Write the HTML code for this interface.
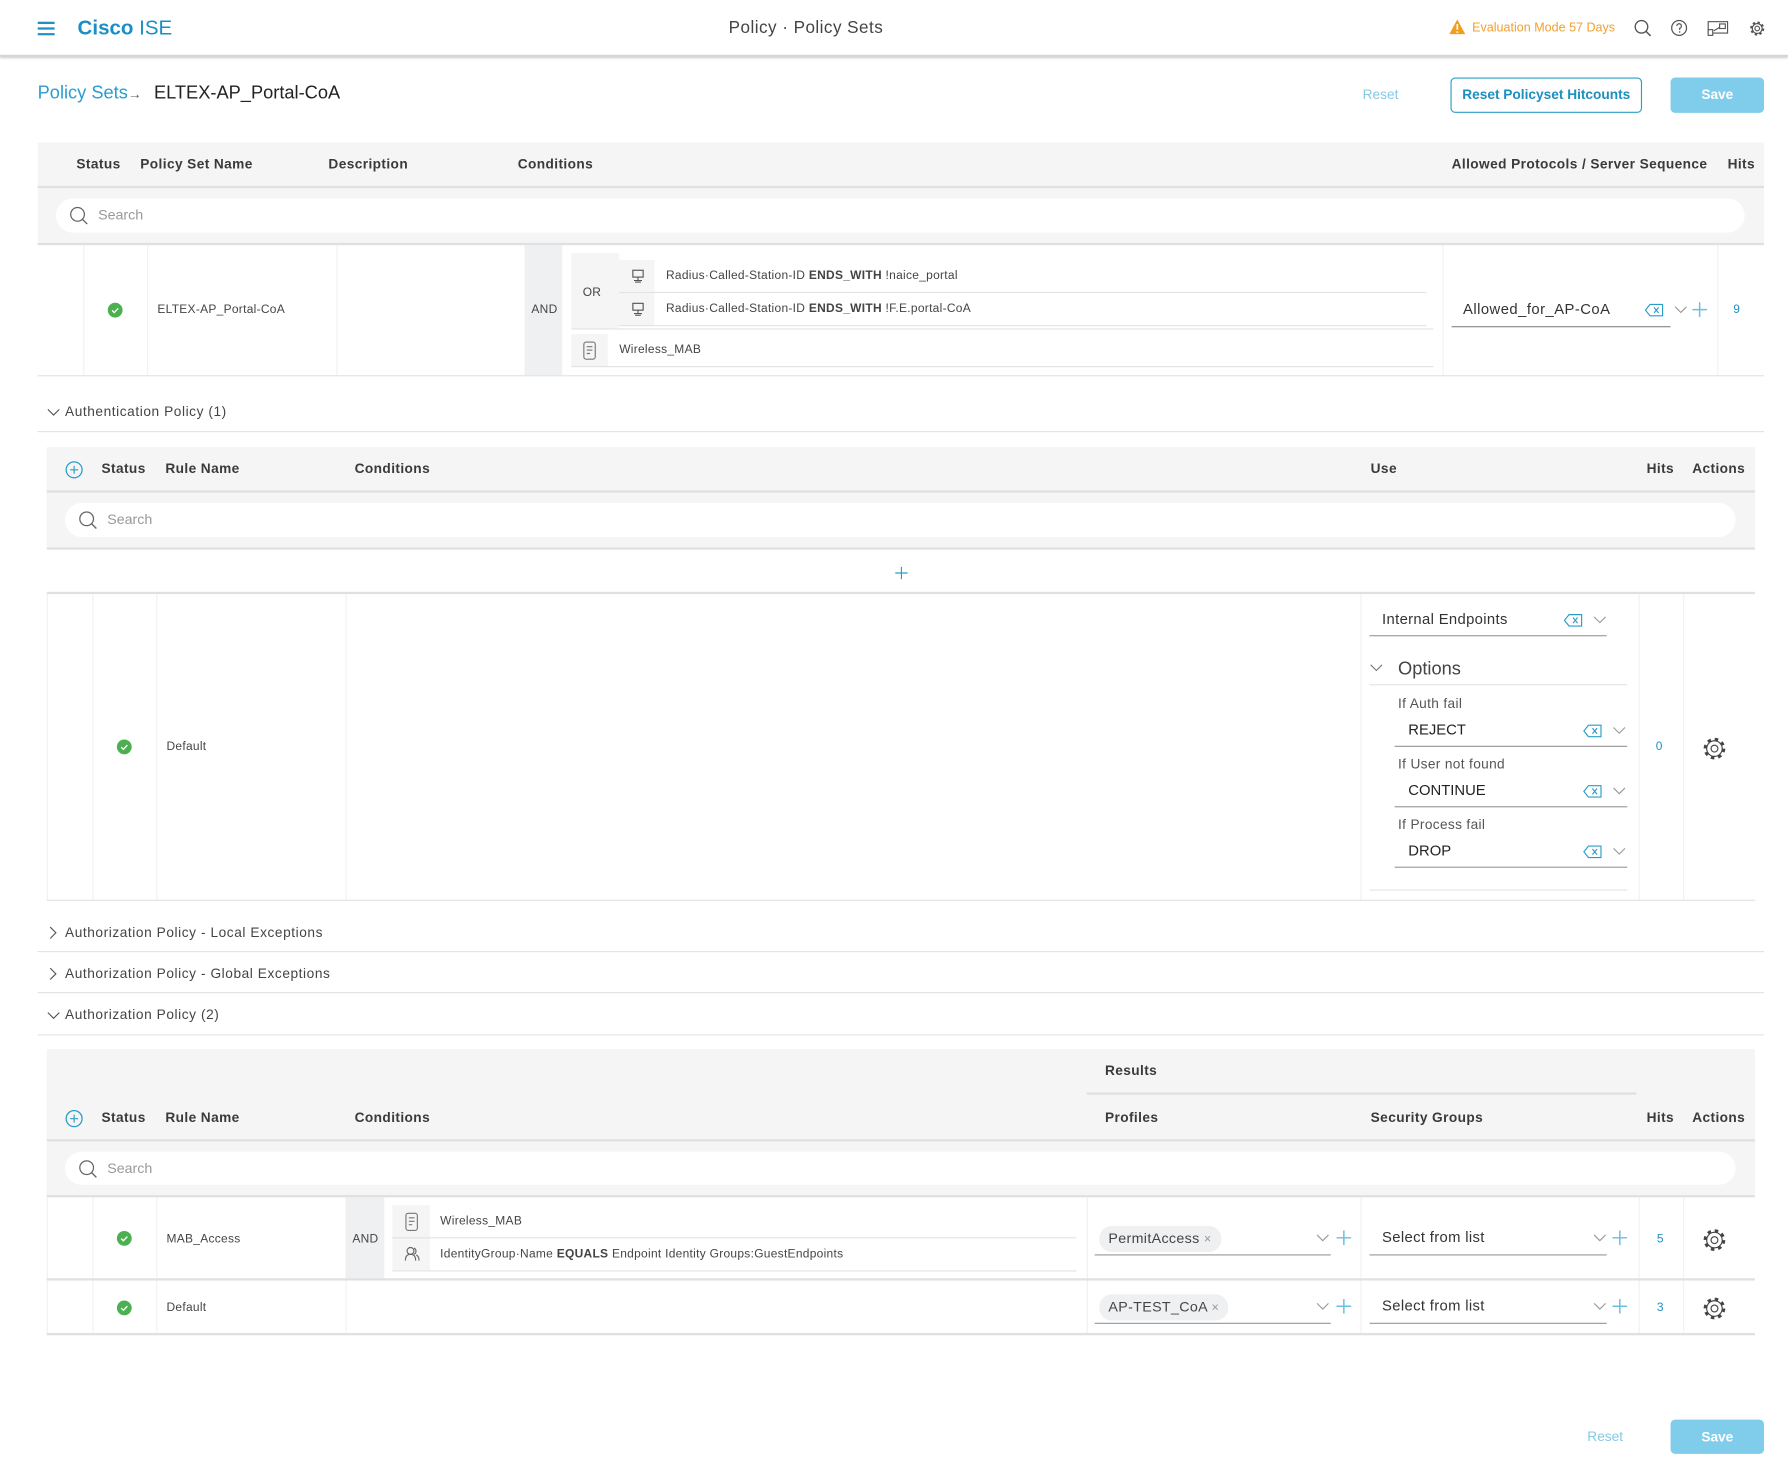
<!DOCTYPE html>
<html><head><meta charset="utf-8">
<style>
*{box-sizing:border-box;margin:0;padding:0}
html,body{width:1788px;height:1472px;overflow:hidden;background:#fff}
#w{position:absolute;left:0;top:0;width:1568px;height:1291px;transform:scale(1.14031);transform-origin:0 0;font-family:"Liberation Sans",Arial,sans-serif;color:#333}
.a{position:absolute}
.t{position:absolute;transform:translateY(-50%);white-space:nowrap;line-height:1.2}
.h{font-size:12px;font-weight:bold;color:#3a3a3a;letter-spacing:0.35px}
.c{font-size:10.5px;color:#444;letter-spacing:0.25px}
.s{font-size:12px;color:#444;letter-spacing:0.5px}
.bg{background:#f5f5f5}
.hl{position:absolute;height:1px;background:#e3e3e3}
.hl2{position:absolute;height:2px;background:#e0e0e0}
.vl{position:absolute;width:1px;background:#f0f0f0}
.pill{position:absolute;background:#fff;border-radius:15px}
.blue{color:#1f8fc4}
.chip{position:absolute;background:#eef0f2;border-radius:11px;font-size:12.5px;color:#444;line-height:22px;padding:0 8px;letter-spacing:0.3px}
</style></head><body><div id="w">

<div class="a" style="left:0;top:0;width:1568px;height:50px;border-bottom:2px solid #d6d6d6;box-shadow:0 1px 2px #ccc"></div>
<svg class="a" style="left:33px;top:19px" width="15" height="12"><path d="M0 1h15M0 6h15M0 11h15" stroke="#1f8fc4" stroke-width="2"/></svg>
<div class="t" style="left:68px;top:25px;font-size:18px;color:#1a8fc6"><b>Cisco</b> ISE</div>
<div class="t" style="left:639px;top:25px;font-size:15px;color:#444;letter-spacing:0.4px">Policy · Policy Sets</div>
<svg class="a" style="left:1271px;top:17px" width="14" height="13"><path d="M7 0L14 13H0z" fill="#f29d1e"/><path d="M7 4v5M7 10.5v1.3" stroke="#fff" stroke-width="1.5"/></svg>
<div class="t" style="left:1291px;top:25px;font-size:11px;color:#f0a030">Evaluation Mode 57 Days</div>
<svg class="a" style="left:1433px;top:17px" width="16" height="16"><circle cx="6.5" cy="6.5" r="5.5" stroke="#555" fill="none" stroke-width="1.2"/><path d="M10.5 10.5l4 4" stroke="#555" stroke-width="1.3"/></svg>
<svg class="a" style="left:1465px;top:17px" width="15" height="15"><circle cx="7.5" cy="7.5" r="6.5" stroke="#555" fill="none" stroke-width="1.1"/><path d="M5.5 5.8a2 2 0 1 1 2.5 2v1.4" stroke="#555" fill="none" stroke-width="1.1"/><circle cx="8" cy="11" r=".7" fill="#555"/></svg>
<svg class="a" style="left:1497px;top:18px" width="19" height="14"><rect x="1" y="1" width="17" height="10" fill="none" stroke="#555"/><rect x="1" y="8" width="4" height="5" fill="#fff" stroke="#555"/><rect x="11" y="3" width="5" height="4" fill="none" stroke="#555"/><path d="M6 9l5-3" stroke="#555"/></svg>
<svg class="a" style="left:1534px;top:18px" width="14" height="14"><circle cx="7" cy="7" r="5" fill="none" stroke="#555" stroke-width="2.4" stroke-dasharray="2 1.93"/><circle cx="7" cy="7" r="4.3" fill="#fff" stroke="#555"/><circle cx="7" cy="7" r="2" fill="none" stroke="#555"/></svg>

<div class="t" style="left:33px;top:82px;font-size:16px;color:#2a9dd0">Policy Sets<span style="font-size:12px;color:#555">→</span></div>
<div class="t" style="left:135px;top:82px;font-size:16px;color:#222">ELTEX-AP_Portal-CoA</div>
<div class="t" style="left:1195px;top:83px;font-size:12px;color:#86c9e6">Reset</div>
<div class="a" style="left:1272px;top:68px;width:168px;height:31px;border:1px solid #2a9dc6;border-radius:4px;text-align:center;line-height:29px;font-size:12px;font-weight:bold;color:#1c8fbf">Reset Policyset Hitcounts</div>
<div class="a" style="left:1465px;top:68px;width:82px;height:31px;background:#7fcdea;border-radius:4px;text-align:center;line-height:31px;font-size:12px;font-weight:bold;color:#fff">Save</div>

<div class="a bg" style="left:33px;top:125px;width:1514px;height:89px"></div>
<div class="hl2" style="left:33px;top:163px;width:1514px"></div>
<div class="hl2" style="left:33px;top:213px;width:1514px"></div>
<div class="t h" style="left:67px;top:144px">Status</div>
<div class="t h" style="left:123px;top:144px">Policy Set Name</div>
<div class="t h" style="left:288px;top:144px">Description</div>
<div class="t h" style="left:454px;top:144px">Conditions</div>
<div class="t h" style="left:1273px;top:144px">Allowed Protocols / Server Sequence</div>
<div class="t h" style="left:1515px;top:144px">Hits</div>
<div class="pill" style="left:49px;top:174px;width:1481px;height:30px"></div>
<svg class="a" style="left:61px;top:181px" width="17" height="17"><circle cx="7" cy="7" r="6" stroke="#666" fill="none" stroke-width="1.1"/><path d="M11 11l4.5 4.5" stroke="#666" stroke-width="1.2"/></svg>
<div class="t" style="left:86px;top:189px;font-size:12.5px;color:#999">Search</div>

<div class="vl" style="left:73px;top:215px;height:114px"></div>
<div class="vl" style="left:129px;top:215px;height:114px"></div>
<div class="vl" style="left:295px;top:215px;height:114px"></div>
<div class="vl" style="left:1265px;top:215px;height:114px"></div>
<div class="vl" style="left:1506px;top:215px;height:114px"></div>
<div class="a" style="left:460px;top:215px;width:33px;height:114px;background:#eef0f2"></div>
<svg class="a" style="left:94px;top:265px" width="14" height="14"><circle cx="7" cy="7" r="6.5" fill="#4caf50"/><path d="M4.3 7.2l1.9 1.9 3.5-3.7" stroke="#fff" fill="none" stroke-width="1.2"/></svg>
<div class="t c" style="left:138px;top:272px">ELTEX-AP_Portal-CoA</div>
<div class="t c" style="left:466px;top:272px">AND</div>
<div class="a bg" style="left:501px;top:222px;width:42px;height:66px"></div>
<div class="t c" style="left:511px;top:257px">OR</div>
<div class="a bg" style="left:543px;top:228px;width:31px;height:58px"></div>
<div class="hl" style="left:543px;top:256px;width:708px"></div>
<div class="hl" style="left:543px;top:285px;width:708px"></div>
<div class="hl" style="left:501px;top:288px;width:756px"></div>
<div class="a bg" style="left:501px;top:293px;width:32px;height:28px"></div>
<div class="hl" style="left:501px;top:321px;width:756px"></div>
<svg class="a" style="left:554px;top:236px" width="11" height="12"><rect x="1" y="1" width="9" height="6" fill="none" stroke="#555"/><path d="M5.5 7v3M2 10h7M3 11.5h5" stroke="#555"/></svg>
<svg class="a" style="left:554px;top:265px" width="11" height="12"><rect x="1" y="1" width="9" height="6" fill="none" stroke="#555"/><path d="M5.5 7v3M2 10h7M3 11.5h5" stroke="#555"/></svg>
<div class="t c" style="left:584px;top:242px">Radius·Called-Station-ID <b>ENDS_WITH</b> !naice_portal</div>
<div class="t c" style="left:584px;top:271px">Radius·Called-Station-ID <b>ENDS_WITH</b> !F.E.portal-CoA</div>
<svg class="a" style="left:511px;top:299px" width="13" height="17"><rect x="1" y="1" width="10" height="15" rx="2" fill="none" stroke="#777"/><path d="M3.5 5h5M3.5 8h5M3.5 11h3" stroke="#777"/></svg>
<div class="t c" style="left:543px;top:307px">Wireless_MAB</div>
<div class="t" style="left:1283px;top:271px;font-size:13px;color:#333;letter-spacing:0.4px">Allowed_for_AP-CoA</div>
<div class="a" style="left:1273px;top:286px;width:192px;height:1px;background:#888"></div>
<svg class="a" style="left:1442px;top:266px" width="17" height="12"><path d="M5 1h11v10H5L1 6z" stroke="#2a9dc6" fill="none"/><path d="M8.5 3.5l4 5M12.5 3.5l-4 5" stroke="#2a9dc6"/></svg>
<svg class="a" style="left:1468px;top:268px" width="12" height="7"><path d="M1 1l5 5 5-5" stroke="#999" fill="none"/></svg>
<svg class="a" style="left:1484px;top:265px" width="13" height="13"><path d="M6.5 0v13M0 6.5h13" stroke="#6bbfe0" stroke-width="1.3"/></svg>
<div class="t blue" style="left:1520px;top:272px;font-size:10.5px">9</div>
<div class="hl" style="left:33px;top:329px;width:1514px"></div>

<svg class="a" style="left:41px;top:358px" width="12" height="7"><path d="M1 1l5 5 5-5" stroke="#555" fill="none"/></svg>
<div class="t s" style="left:57px;top:361px">Authentication Policy (1)</div>
<div class="hl" style="left:33px;top:378px;width:1514px"></div>

<div class="a bg" style="left:41px;top:392px;width:1498px;height:89px"></div>
<div class="hl2" style="left:41px;top:430px;width:1498px"></div>
<div class="hl2" style="left:41px;top:480px;width:1498px"></div>
<svg class="a" style="left:57px;top:404px" width="16" height="16"><circle cx="8" cy="8" r="7" fill="none" stroke="#2a9dc6" stroke-width="1.1"/><path d="M8 4.5v7M4.5 8h7" stroke="#2a9dc6"/></svg>
<div class="t h" style="left:89px;top:411px">Status</div>
<div class="t h" style="left:145px;top:411px">Rule Name</div>
<div class="t h" style="left:311px;top:411px">Conditions</div>
<div class="t h" style="left:1202px;top:411px">Use</div>
<div class="t h" style="left:1444px;top:411px">Hits</div>
<div class="t h" style="left:1484px;top:411px">Actions</div>
<div class="pill" style="left:57px;top:441px;width:1465px;height:30px"></div>
<svg class="a" style="left:69px;top:448px" width="17" height="17"><circle cx="7" cy="7" r="6" stroke="#666" fill="none" stroke-width="1.1"/><path d="M11 11l4.5 4.5" stroke="#666" stroke-width="1.2"/></svg>
<div class="t" style="left:94px;top:456px;font-size:12.5px;color:#999">Search</div>
<svg class="a" style="left:785px;top:497px" width="11" height="11"><path d="M5.5 0v11M0 5.5h11" stroke="#2a9dc6"/></svg>
<div class="hl2" style="left:41px;top:519px;width:1498px"></div>

<div class="vl" style="left:41px;top:521px;height:268px"></div>
<div class="vl" style="left:81px;top:521px;height:268px"></div>
<div class="vl" style="left:137px;top:521px;height:268px"></div>
<div class="vl" style="left:303px;top:521px;height:268px"></div>
<div class="vl" style="left:1193px;top:521px;height:268px"></div>
<div class="vl" style="left:1437px;top:521px;height:268px"></div>
<div class="vl" style="left:1476px;top:521px;height:268px"></div>
<svg class="a" style="left:102px;top:648px" width="14" height="14"><circle cx="7" cy="7" r="6.5" fill="#4caf50"/><path d="M4.3 7.2l1.9 1.9 3.5-3.7" stroke="#fff" fill="none" stroke-width="1.2"/></svg>
<div class="t c" style="left:146px;top:655px">Default</div>
<div class="t" style="left:1212px;top:543px;font-size:13px;color:#333;letter-spacing:0.3px">Internal Endpoints</div>
<div class="a" style="left:1201px;top:557px;width:208px;height:1px;background:#999"></div>
<svg class="a" style="left:1371px;top:538px" width="17" height="12"><path d="M5 1h11v10H5L1 6z" stroke="#2a9dc6" fill="none"/><path d="M8.5 3.5l4 5M12.5 3.5l-4 5" stroke="#2a9dc6"/></svg>
<svg class="a" style="left:1397px;top:540px" width="12" height="7"><path d="M1 1l5 5 5-5" stroke="#999" fill="none"/></svg>
<svg class="a" style="left:1201px;top:582px" width="12" height="7"><path d="M1 1l5 5 5-5" stroke="#777" fill="none"/></svg>
<div class="t" style="left:1226px;top:587px;font-size:16px;color:#444">Options</div>
<div class="hl" style="left:1201px;top:600px;width:226px"></div>

<div class="t s" style="left:1226px;top:617px;color:#555;letter-spacing:0.3px">If Auth fail</div>
<div class="t" style="left:1235px;top:640px;font-size:13px;color:#222">REJECT</div>
<div class="a" style="left:1223px;top:654px;width:204px;height:1px;background:#999"></div>
<svg class="a" style="left:1388px;top:635px" width="17" height="12"><path d="M5 1h11v10H5L1 6z" stroke="#2a9dc6" fill="none"/><path d="M8.5 3.5l4 5M12.5 3.5l-4 5" stroke="#2a9dc6"/></svg>
<svg class="a" style="left:1414px;top:637px" width="12" height="7"><path d="M1 1l5 5 5-5" stroke="#999" fill="none"/></svg>

<div class="t s" style="left:1226px;top:670px;color:#555;letter-spacing:0.3px">If User not found</div>
<div class="t" style="left:1235px;top:693px;font-size:13px;color:#222">CONTINUE</div>
<div class="a" style="left:1223px;top:707px;width:204px;height:1px;background:#999"></div>
<svg class="a" style="left:1388px;top:688px" width="17" height="12"><path d="M5 1h11v10H5L1 6z" stroke="#2a9dc6" fill="none"/><path d="M8.5 3.5l4 5M12.5 3.5l-4 5" stroke="#2a9dc6"/></svg>
<svg class="a" style="left:1414px;top:690px" width="12" height="7"><path d="M1 1l5 5 5-5" stroke="#999" fill="none"/></svg>

<div class="t s" style="left:1226px;top:723px;color:#555;letter-spacing:0.3px">If Process fail</div>
<div class="t" style="left:1235px;top:746px;font-size:13px;color:#222">DROP</div>
<div class="a" style="left:1223px;top:760px;width:204px;height:1px;background:#999"></div>
<svg class="a" style="left:1388px;top:741px" width="17" height="12"><path d="M5 1h11v10H5L1 6z" stroke="#2a9dc6" fill="none"/><path d="M8.5 3.5l4 5M12.5 3.5l-4 5" stroke="#2a9dc6"/></svg>
<svg class="a" style="left:1414px;top:743px" width="12" height="7"><path d="M1 1l5 5 5-5" stroke="#999" fill="none"/></svg>
<div class="hl" style="left:1201px;top:780px;width:226px"></div>
<div class="t blue" style="left:1452px;top:655px;font-size:10.5px">0</div>
<svg class="a" style="left:1493px;top:646px" width="21" height="21"><circle cx="10.5" cy="10.5" r="8" fill="none" stroke="#444" stroke-width="3" stroke-dasharray="3 3.28"/><circle cx="10.5" cy="10.5" r="6.8" fill="#fff" stroke="#444" stroke-width="1"/><circle cx="10.5" cy="10.5" r="3" fill="none" stroke="#444"/></svg>
<div class="hl" style="left:41px;top:789px;width:1498px"></div>

<svg class="a" style="left:43px;top:812px" width="7" height="12"><path d="M1 1l5 5-5 5" stroke="#555" fill="none"/></svg>
<div class="t s" style="left:57px;top:818px">Authorization Policy - Local Exceptions</div>
<div class="hl" style="left:33px;top:834px;width:1514px"></div>
<svg class="a" style="left:43px;top:848px" width="7" height="12"><path d="M1 1l5 5-5 5" stroke="#555" fill="none"/></svg>
<div class="t s" style="left:57px;top:854px">Authorization Policy - Global Exceptions</div>
<div class="hl" style="left:33px;top:870px;width:1514px"></div>
<svg class="a" style="left:41px;top:887px" width="12" height="7"><path d="M1 1l5 5 5-5" stroke="#555" fill="none"/></svg>
<div class="t s" style="left:57px;top:890px">Authorization Policy (2)</div>
<div class="hl" style="left:33px;top:907px;width:1514px"></div>

<div class="a bg" style="left:41px;top:920px;width:1498px;height:129px"></div>
<div class="t h" style="left:969px;top:939px">Results</div>
<div class="hl2" style="left:953px;top:958px;width:482px"></div>
<div class="hl2" style="left:41px;top:999px;width:1498px"></div>
<div class="hl2" style="left:41px;top:1048px;width:1498px"></div>
<svg class="a" style="left:57px;top:973px" width="16" height="16"><circle cx="8" cy="8" r="7" fill="none" stroke="#2a9dc6" stroke-width="1.1"/><path d="M8 4.5v7M4.5 8h7" stroke="#2a9dc6"/></svg>
<div class="t h" style="left:89px;top:980px">Status</div>
<div class="t h" style="left:145px;top:980px">Rule Name</div>
<div class="t h" style="left:311px;top:980px">Conditions</div>
<div class="t h" style="left:969px;top:980px">Profiles</div>
<div class="t h" style="left:1202px;top:980px">Security Groups</div>
<div class="t h" style="left:1444px;top:980px">Hits</div>
<div class="t h" style="left:1484px;top:980px">Actions</div>
<div class="pill" style="left:57px;top:1010px;width:1465px;height:29px"></div>
<svg class="a" style="left:69px;top:1017px" width="17" height="17"><circle cx="7" cy="7" r="6" stroke="#666" fill="none" stroke-width="1.1"/><path d="M11 11l4.5 4.5" stroke="#666" stroke-width="1.2"/></svg>
<div class="t" style="left:94px;top:1025px;font-size:12.5px;color:#999">Search</div>

<div class="vl" style="left:41px;top:1050px;height:120px"></div>
<div class="vl" style="left:81px;top:1050px;height:120px"></div>
<div class="vl" style="left:137px;top:1050px;height:120px"></div>
<div class="vl" style="left:303px;top:1050px;height:120px"></div>
<div class="vl" style="left:953px;top:1050px;height:120px"></div>
<div class="vl" style="left:1193px;top:1050px;height:120px"></div>
<div class="vl" style="left:1437px;top:1050px;height:120px"></div>
<div class="vl" style="left:1476px;top:1050px;height:120px"></div>
<div class="a" style="left:303px;top:1050px;width:34px;height:72px;background:#eef0f2"></div>
<div class="t c" style="left:309px;top:1087px">AND</div>
<div class="a bg" style="left:344px;top:1057px;width:33px;height:57px"></div>
<div class="hl" style="left:344px;top:1085px;width:600px"></div>
<div class="hl" style="left:344px;top:1114px;width:600px"></div>
<svg class="a" style="left:355px;top:1063px" width="13" height="17"><rect x="1" y="1" width="10" height="15" rx="2" fill="none" stroke="#777"/><path d="M3.5 5h5M3.5 8h5M3.5 11h3" stroke="#777"/></svg>
<svg class="a" style="left:355px;top:1093px" width="13" height="13"><circle cx="5" cy="4" r="3" fill="none" stroke="#666"/><path d="M0.5 12.5c0-4 2-5.5 4.5-5.5s4.5 1.5 4.5 5.5M8 1.5a3 3 0 0 1 0 5.5M10 7.5c1.5.8 2.5 2.5 2.5 5" fill="none" stroke="#666"/></svg>
<div class="t c" style="left:386px;top:1071px">Wireless_MAB</div>
<div class="t c" style="left:386px;top:1100px">IdentityGroup·Name <b>EQUALS</b> Endpoint Identity Groups:GuestEndpoints</div>
<svg class="a" style="left:102px;top:1079px" width="14" height="14"><circle cx="7" cy="7" r="6.5" fill="#4caf50"/><path d="M4.3 7.2l1.9 1.9 3.5-3.7" stroke="#fff" fill="none" stroke-width="1.2"/></svg>
<div class="t c" style="left:146px;top:1087px">MAB_Access</div>
<div class="chip" style="left:964px;top:1075px">PermitAccess <span style="color:#999;font-size:11px">×</span></div>
<div class="a" style="left:960px;top:1100px;width:207px;height:1px;background:#999"></div>
<svg class="a" style="left:1154px;top:1082px" width="12" height="7"><path d="M1 1l5 5 5-5" stroke="#999" fill="none"/></svg>
<svg class="a" style="left:1172px;top:1079px" width="13" height="13"><path d="M6.5 0v13M0 6.5h13" stroke="#6bbfe0" stroke-width="1.3"/></svg>
<div class="t" style="left:1212px;top:1085px;font-size:13px;color:#333;letter-spacing:0.3px">Select from list</div>
<div class="a" style="left:1201px;top:1100px;width:208px;height:1px;background:#999"></div>
<svg class="a" style="left:1397px;top:1082px" width="12" height="7"><path d="M1 1l5 5 5-5" stroke="#999" fill="none"/></svg>
<svg class="a" style="left:1414px;top:1079px" width="13" height="13"><path d="M6.5 0v13M0 6.5h13" stroke="#6bbfe0" stroke-width="1.3"/></svg>
<div class="t blue" style="left:1453px;top:1087px;font-size:10.5px">5</div>
<svg class="a" style="left:1493px;top:1077px" width="21" height="21"><circle cx="10.5" cy="10.5" r="8" fill="none" stroke="#444" stroke-width="3" stroke-dasharray="3 3.28"/><circle cx="10.5" cy="10.5" r="6.8" fill="#fff" stroke="#444" stroke-width="1"/><circle cx="10.5" cy="10.5" r="3" fill="none" stroke="#444"/></svg>
<div class="hl2" style="left:41px;top:1121px;width:1498px"></div>

<svg class="a" style="left:102px;top:1140px" width="14" height="14"><circle cx="7" cy="7" r="6.5" fill="#4caf50"/><path d="M4.3 7.2l1.9 1.9 3.5-3.7" stroke="#fff" fill="none" stroke-width="1.2"/></svg>
<div class="t c" style="left:146px;top:1147px">Default</div>
<div class="chip" style="left:964px;top:1135px">AP-TEST_CoA <span style="color:#999;font-size:11px">×</span></div>
<div class="a" style="left:960px;top:1160px;width:207px;height:1px;background:#999"></div>
<svg class="a" style="left:1154px;top:1142px" width="12" height="7"><path d="M1 1l5 5 5-5" stroke="#999" fill="none"/></svg>
<svg class="a" style="left:1172px;top:1139px" width="13" height="13"><path d="M6.5 0v13M0 6.5h13" stroke="#6bbfe0" stroke-width="1.3"/></svg>
<div class="t" style="left:1212px;top:1145px;font-size:13px;color:#333;letter-spacing:0.3px">Select from list</div>
<div class="a" style="left:1201px;top:1160px;width:208px;height:1px;background:#999"></div>
<svg class="a" style="left:1397px;top:1142px" width="12" height="7"><path d="M1 1l5 5 5-5" stroke="#999" fill="none"/></svg>
<svg class="a" style="left:1414px;top:1139px" width="13" height="13"><path d="M6.5 0v13M0 6.5h13" stroke="#6bbfe0" stroke-width="1.3"/></svg>
<div class="t blue" style="left:1453px;top:1147px;font-size:10.5px">3</div>
<svg class="a" style="left:1493px;top:1137px" width="21" height="21"><circle cx="10.5" cy="10.5" r="8" fill="none" stroke="#444" stroke-width="3" stroke-dasharray="3 3.28"/><circle cx="10.5" cy="10.5" r="6.8" fill="#fff" stroke="#444" stroke-width="1"/><circle cx="10.5" cy="10.5" r="3" fill="none" stroke="#444"/></svg>
<div class="hl2" style="left:41px;top:1169px;width:1498px"></div>

<div class="t" style="left:1392px;top:1260px;font-size:12px;color:#86c9e6">Reset</div>
<div class="a" style="left:1465px;top:1245px;width:82px;height:30px;background:#7fcdea;border-radius:4px;text-align:center;line-height:30px;font-size:12px;font-weight:bold;color:#fff">Save</div>

</div></body></html>
